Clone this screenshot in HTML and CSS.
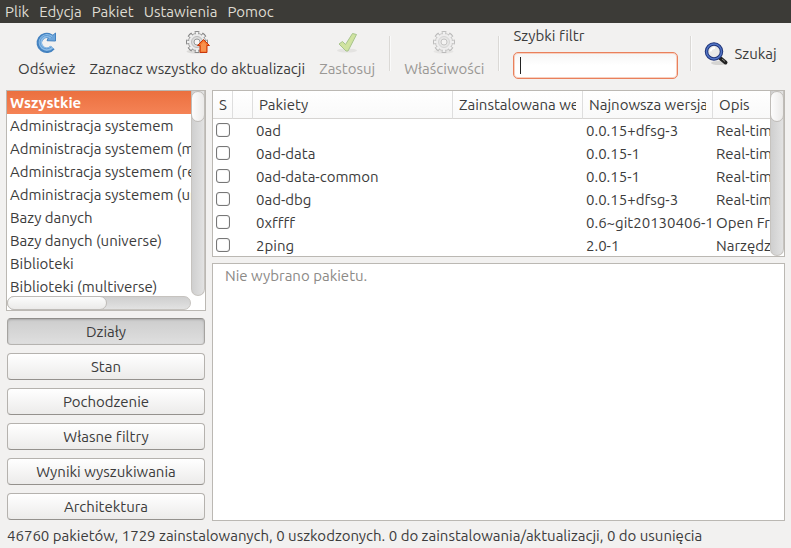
FILE: index.html
```html
<!DOCTYPE html>
<html lang="pl">
<head>
    <meta charset="UTF-8">
    <meta name="viewport" content="width=device-width,initial-scale=1">
    <title>Menedżer pakietów</title>
    <link rel="stylesheet" href="styles.css">
</head>
<body>
<nav class="menubar">
    <button type="button">Plik</button>
    <button type="button">Edycja</button>
    <button type="button">Pakiet</button>
    <button type="button">Ustawienia</button>
    <button type="button">Pomoc</button>
</nav>

<header class="toolbar">
    <button type="button" class="tool">
        <svg class="icon" viewBox="0 0 24 24">
            <path d="M17.500 17.500A7.400 7.400 0 1 1 15.500 6.500" fill="none" stroke="#4482c0" stroke-width="5.500"/>
            <path d="M12 10.700L20.500 11V3L18 5.200L15 4.500z" fill="#6ca5db" stroke="#4482c0"/>
            <path d="M17 17A6.700 6.700 0 1 1 16.300 7.300" fill="none" stroke="#8bbce8" stroke-width="3.400"/>
            <path d="M16.500 16.800A6.700 6.700 0 1 1 17 8" fill="none" stroke="#5f9ad3"/>
        </svg>
        Odśwież
    </button>
    <button type="button" class="tool">
        <svg class="icon" viewBox="0 0 24 24">
            <use href="#gear"/>
            <path d="M18.500 9.500L24.500 15.500H22V22.500H15V15.500H12.500z" fill="#f37329" stroke="#c8370b"/>
            <path d="M18.500 11.500L21.500 14.500H21V21.500H16V14.500z" fill="#f8924e"/>
        </svg>
        Zaznacz wszystko do aktualizacji
    </button>
    <button type="button" class="tool" disabled>
        <svg class="icon" viewBox="0 0 24 24">
            <ellipse cx="12" cy="20.500" rx="10" ry="2" fill="#e4e3e1"/>
            <path d="M4 14L7.500 11.500L10.500 14.500L17.500 3.500L21.500 4.500L13 21H11z" fill="#d0e3a0" stroke="#a7c48c" stroke-linejoin="round"/>
        </svg>
        Zastosuj
    </button>
    <span class="separator"></span>
    <button type="button" class="tool" disabled>
        <svg class="icon faded" viewBox="0 0 24 24">
            <g id="gear">
                <ellipse cx="11.500" cy="21.500" rx="10" ry="2" fill="#dcdbd9"/>
                <g fill="none" stroke="#858585">
                    <circle cx="12" cy="12" r="9" stroke-width="4" pathLength="80" stroke-dasharray="6 4" stroke-dashoffset="3"/>
                    <circle cx="12" cy="12" r="8.500"/>
                </g>
                <circle cx="12" cy="12" r="8.500" fill="none" stroke="#f0f0f0" stroke-width="3" pathLength="80" stroke-dasharray="4 6" stroke-dashoffset="2"/>
                <circle cx="12" cy="12" r="8" fill="#ebebeb"/>
                <circle cx="12" cy="12" r="5.500" fill="#dcdcdc" stroke="#bbb"/>
                <circle cx="12" cy="12" r="3" fill="#f6f5f4" stroke="#999"/>
            </g>
        </svg>
        Właściwości
    </button>
    <span class="separator"></span>
    <div class="filter">
        <label for="filter">Szybki filtr</label>
        <div class="filter-box">
            <input type="text" id="filter" autocomplete="off">
        </div>
    </div>
    <span class="separator"></span>
    <button type="button" class="search">
        <svg class="icon" viewBox="0 0 24 24">
            <ellipse cx="15" cy="21" rx="8" ry="2" fill="#d5d4d2"/>
            <path d="M16 16L21.500 20.500" stroke="#222" stroke-width="4" stroke-linecap="round"/>
            <path d="M18 17L21 19.500" stroke="#8c8c86"/>
            <circle cx="10" cy="9.500" r="7.500" fill="#e9e9e7" stroke="#1f3479" stroke-width="3.500"/>
            <circle cx="10" cy="9.500" r="7.500" fill="none" stroke="#5375c5" stroke-width="1.500"/>
            <path d="M6.500 9.500A4 4 0 0 1 11 6" fill="none" stroke="#fff" stroke-width="2"/>
        </svg>
        Szukaj
    </button>
</header>

<main>
    <aside>
        <div class="panel categories">
            <ul>
                <li class="selected">Wszystkie</li>
                <li>Administracja systemem</li>
                <li>Administracja systemem (multiverse)</li>
                <li>Administracja systemem (restricted)</li>
                <li>Administracja systemem (universe)</li>
                <li>Bazy danych</li>
                <li>Bazy danych (universe)</li>
                <li>Biblioteki</li>
                <li>Biblioteki (multiverse)</li>
            </ul>
            <div class="scrollbar"><div class="thumb"></div></div>
            <div class="scrollbar horizontal"><div class="thumb"></div></div>
        </div>
        <div class="views">
            <button type="button" class="active">Działy</button>
            <button type="button">Stan</button>
            <button type="button">Pochodzenie</button>
            <button type="button">Własne filtry</button>
            <button type="button">Wyniki wyszukiwania</button>
            <button type="button">Architektura</button>
        </div>
    </aside>

    <section>
        <div class="panel packages">
            <table>
                <colgroup>
                    <col class="col-mark">
                    <col class="col-mark">
                    <col class="col-name">
                    <col class="col-version">
                    <col class="col-version">
                    <col>
                </colgroup>
                <thead>
                    <tr>
                        <th><div>S</div></th>
                        <th></th>
                        <th><div>Pakiety</div></th>
                        <th><div>Zainstalowana wersja</div></th>
                        <th><div>Najnowsza wersja</div></th>
                        <th><div>Opis</div></th>
                    </tr>
                </thead>
                <tbody>
                    <tr><td><input type="checkbox" aria-label="0ad"></td><td></td><td>0ad</td><td></td><td>0.0.15+dfsg-3</td><td>Real-time strategy</td></tr>
                    <tr><td><input type="checkbox" aria-label="0ad-data"></td><td></td><td>0ad-data</td><td></td><td>0.0.15-1</td><td>Real-time strategy</td></tr>
                    <tr><td><input type="checkbox" aria-label="0ad-data-common"></td><td></td><td>0ad-data-common</td><td></td><td>0.0.15-1</td><td>Real-time strategy</td></tr>
                    <tr><td><input type="checkbox" aria-label="0ad-dbg"></td><td></td><td>0ad-dbg</td><td></td><td>0.0.15+dfsg-3</td><td>Real-time strategy</td></tr>
                    <tr><td><input type="checkbox" aria-label="0xffff"></td><td></td><td>0xffff</td><td></td><td>0.6~git20130406-1</td><td>Open Free Fiasco</td></tr>
                    <tr><td><input type="checkbox" aria-label="2ping"></td><td></td><td>2ping</td><td></td><td>2.0-1</td><td>Narzędzie ping</td></tr>
                </tbody>
            </table>
            <div class="scrollbar"><div class="thumb"></div></div>
        </div>
        <div class="panel details">Nie wybrano pakietu.</div>
    </section>
</main>

<footer>46760 pakietów, 1729 zainstalowanych, 0 uszkodzonych. 0 do zainstalowania/aktualizacji, 0 do usunięcia</footer>
</body>
</html>
```
FILE: styles.css
```css
* {
    margin: 0;
    padding: 0;
    box-sizing: border-box;
}

body {
    display: flex;
    flex-direction: column;
    min-height: 100vh;
    background: #f2f1f0;
    color: #3c3c3c;
    font: 15px/18px Ubuntu, "Noto Sans", sans-serif;
    font-variant-ligatures: none;
}

button {
    border: 0;
    background: none;
    color: inherit;
    font: inherit;
    font-variant-ligatures: none;
    white-space: nowrap;
}

.menubar {
    display: flex;
    gap: 10px;
    height: 23px;
    padding: 0 5px;
    background: #3c3b37;
    color: #dfdbd2;
}

.toolbar {
    display: flex;
    height: 67px;
    padding: 0 11px;
}

.tool {
    display: flex;
    flex-direction: column;
    align-items: center;
    gap: 6px;
    padding: 7px 7px 0;
}

.tool:disabled {
    color: #9a9895;
}

.icon {
    width: 24px;
    height: 24px;
    flex: none;
    overflow: visible;
}

.faded {
    opacity: 0.5;
}

.separator {
    width: 2px;
    height: 35px;
    margin: 13px 6px 0 7px;
    border-left: 1px solid #dbd9d6;
    border-right: 1px solid #fafafa;
}

.filter {
    display: flex;
    flex-direction: column;
    gap: 7px;
    padding: 4px 5px 0 7px;
}

.filter-box {
    position: relative;
}

/* text cursor */
.filter-box::before {
    content: "";
    position: absolute;
    left: 7px;
    top: 5px;
    width: 1px;
    height: 17px;
    background: #222;
}

.filter input {
    display: block;
    width: 165px;
    height: 27px;
    padding: 0 8px;
    border: 1px solid #e9805c;
    border-radius: 5px;
    background: linear-gradient(#f5f5f5, #fff 50%);
    box-shadow: inset 0 0 0 1px #f8d0c0;
    font: inherit;
    outline: none;
}

.search {
    display: flex;
    align-items: center;
    gap: 6px;
    padding: 0 6px 6px;
}

main {
    display: flex;
    flex: 1;
    gap: 6px;
    padding: 0 6px;
}

.panel {
    border: 1px solid #bbb8b3;
    background: #fff;
}

aside {
    display: flex;
    flex-direction: column;
    gap: 7px;
    width: 200px;
    padding-bottom: 1px;
}

.categories {
    display: grid;
    grid-template-columns: 1fr 14px;
    grid-template-rows: 1fr 14px;
    flex: 1 1 0;
    min-height: 0;
}

.categories ul {
    height: 205px;
    overflow: hidden;
    list-style: none;
}

.categories li {
    height: 23px;
    padding-left: 3px;
    line-height: 24px;
    white-space: nowrap;
}

.categories .selected {
    background: linear-gradient(#eb703f, #f58356);
    color: #fff;
    font-weight: bold;
}

.scrollbar {
    border: 1px solid #c6c3bf;
    border-width: 0 1px 1px;
    border-radius: 0 0 7px 7px;
    background: linear-gradient(to right, #cfcfcf, #e2e2e2);
}

.scrollbar .thumb {
    width: 14px;
    height: 31px;
    margin-left: -1px;
    border: 1px solid #bfbcb8;
    border-radius: 7px;
    background: linear-gradient(to right, #fcfcfc, #ebeae9);
}

.horizontal {
    border-width: 1px;
    border-radius: 7px;
    background: linear-gradient(#cfcfcf, #e2e2e2);
}

.horizontal .thumb {
    width: 55%;
    height: 14px;
    margin-top: -1px;
    background: linear-gradient(#fcfcfc, #ebeae9);
}

.views {
    display: flex;
    flex-direction: column;
    gap: 8px;
    padding: 0 1px;
}

.views button {
    height: 27px;
    border: 1px solid #b5b2ae;
    border-bottom-color: #94918d;
    border-radius: 4px;
    background: linear-gradient(#fff, #ecebea);
}

.views .active {
    border-color: #8f8d8a #a5a3a0 #b5b3b0;
    background: linear-gradient(#cdcdcd, #dfdfdf);
    box-shadow: inset 0 1px 2px #aaa;
}

section {
    display: flex;
    flex-direction: column;
    flex: 1;
    gap: 6px;
    min-width: 0;
}

.packages {
    display: grid;
    grid-template-columns: 1fr 14px;
    grid-template-rows: 100%;
    height: 167px;
    overflow: hidden;
}

table {
    width: 100%;
    table-layout: fixed;
    border-collapse: separate;
    border-spacing: 0;
}

.col-mark {
    width: 20px;
}

.col-name {
    width: 200px;
}

.col-version {
    width: 130px;
}

th,
td,
th div {
    overflow: hidden;
    white-space: nowrap;
    text-align: left;
}

th {
    height: 28px;
    padding: 0 6px;
    border-right: 1px solid #dedede;
    border-bottom: 1px solid #d6d4d2;
    background: linear-gradient(#fff, #f9f9f9);
    font-weight: normal;
}

th:first-child {
    padding-right: 0;
}

th:last-child {
    border-right: 0;
}

td {
    height: 23px;
    padding-left: 3px;
}

td input {
    display: block;
    appearance: none;
    width: 14px;
    height: 14px;
    margin-bottom: 2px;
    border: 1px solid #777;
    border-radius: 3px;
    background: #fff;
    box-shadow: inset 0 0 1px #999;
}

.details {
    flex: 1;
    padding: 3px 12px;
    color: #8c8a87;
}

footer {
    height: 27px;
    padding: 6px 7px;
    white-space: nowrap;
}
```
